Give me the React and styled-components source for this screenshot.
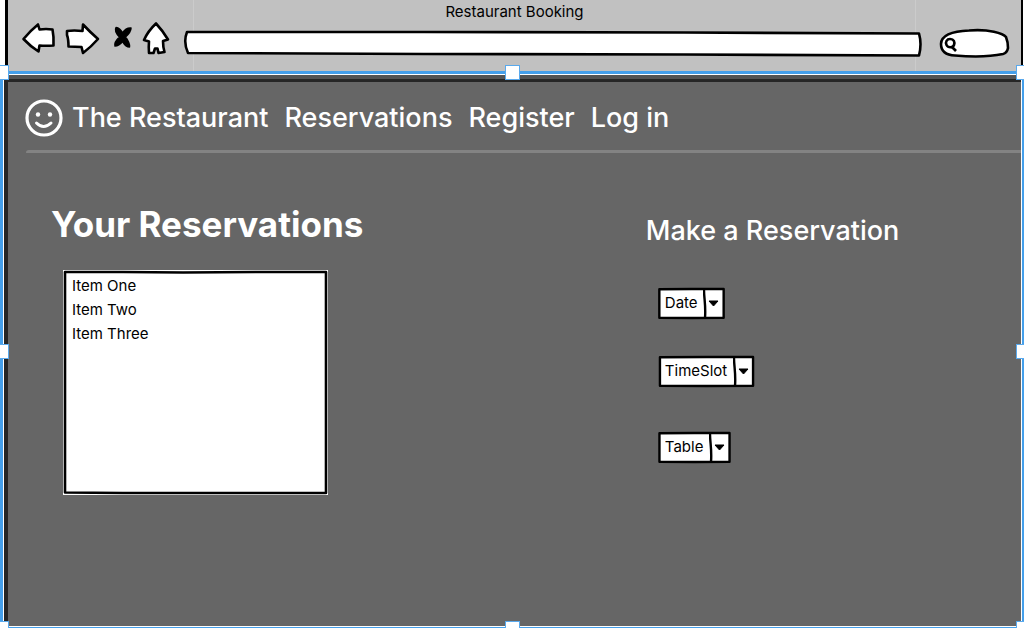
import React from "react";
import styled, { createGlobalStyle } from "styled-components";

const GlobalStyle = createGlobalStyle`
  *, *::before, *::after { box-sizing: border-box; }
  body {
    margin: 0;
    background: #fff;
    font-family: Inter, "Liberation Sans", sans-serif;
    color: #000;
  }
`;

const Page = styled.div`
  display: flex;
  flex-direction: column;
  min-height: 100vh;
  overflow: hidden;
`;

const Chrome = styled.header`
  display: flex;
  flex-direction: column;
  margin: 0 1px 0 5px;
  padding-bottom: 13px;
  border: solid #000;
  border-width: 0 2px 0 3px;
  background:
    linear-gradient(#cbcbcb, #cbcbcb) 185px 0 / 1px 100% no-repeat,
    linear-gradient(#cbcbcb, #cbcbcb) right 105px top 0 / 1px 100% no-repeat,
    #c1c1c1;
`;

const WindowTitle = styled.div`
  padding-top: 2px;
  font-size: 15px;
  line-height: 20px;
  text-align: center;
`;

const Toolbar = styled.div`
  display: flex;
  align-items: center;
  gap: 9px;
  height: 36px;
  padding: 0 11px 0 14px;
`;

const ToolButton = styled.button`
  display: flex;
  flex: none;
  width: ${(p) => p.$width}px;
  padding: 0;
  border: 0;
  background: none;

  svg {
    display: block;
    width: 100%;
    height: 36px;
    overflow: visible;
    fill: #fff;
    stroke: #000;
    stroke-width: 2.6;
    stroke-linejoin: round;
    stroke-linecap: round;
  }
`;

const Field = styled.div`
  position: relative;
  flex: ${(p) => (p.$width ? "none" : "1")};
  width: ${(p) => (p.$width ? p.$width + "px" : "auto")};
  height: 30px;
  margin-top: 6px;
  margin-left: ${(p) => (p.$width ? "8px" : "0")};

  input {
    position: relative;
    width: 100%;
    height: 100%;
    padding: 0 10px 0 ${(p) => (p.$width ? "20px" : "10px")};
    border: 0;
    outline: 0;
    background: transparent;
    font: inherit;
    font-size: 15px;
  }
`;

const Outline = styled.svg`
  position: absolute;
  inset: 0;
  width: 100%;
  height: 100%;
  overflow: visible;
  pointer-events: none;
  fill: ${(p) => p.$fill || "none"};
  stroke: #000;
  stroke-width: ${(p) => p.$stroke || 2.6};
  stroke-linejoin: round;

  path { vector-effect: non-scaling-stroke; }
`;

const Canvas = styled.div`
  position: relative;
  display: flex;
  flex: 1;
  padding: 4px 3px 2px 4px;
`;

const Selection = styled.div`
  position: absolute;
  inset: 0;
  border: solid #459fea;
  border-width: 3px 2px 1px 3px;
  box-shadow: inset 0 0 0 1px #fff;
  pointer-events: none;
`;

const place = {
  top: "top: -6px;",
  middle: "top: calc(50% - 6px);",
  bottom: "bottom: -8px;",
  left: "left: -6px;",
  center: "left: calc(50% - 7px);",
  right: "right: -7px;",
};

const Handle = styled.span`
  position: absolute;
  ${(p) => place[p.$v]}
  ${(p) => place[p.$h]}
  width: 15px;
  height: 15px;
  border: 1px solid #5aa9ec;
  background: #fff;
`;

const Screen = styled.div`
  display: flex;
  flex-direction: column;
  flex: 1;
  border-left: 4px solid #262626;
  background: #666;
  color: #fff;
`;

const TopEdge = styled.div`
  height: 7px;
  border-top: 4px solid #535353;
  background: #262626;
`;

const Nav = styled.nav`
  display: flex;
  align-items: center;
  gap: 16px;
  height: 68px;
  padding: 4px 17px 0;
`;

const Brand = styled.a`
  display: flex;
  align-items: center;
  gap: 9px;
  color: inherit;
  font-size: 27px;
  line-height: 36px;
  font-weight: 500;
  text-decoration: none;
  white-space: nowrap;

  svg { flex: none; }
`;

const NavLink = styled.a`
  color: inherit;
  font-size: 27px;
  line-height: 36px;
  font-weight: 500;
  text-decoration: none;
  white-space: nowrap;
`;

const Divider = styled.hr`
  width: auto;
  height: 3px;
  margin: 0 0 0 18px;
  border: 0;
  border-radius: 20px 0 0 2px;
  background: #838383;
`;

const Content = styled.main`
  display: grid;
  grid-template-columns: 17fr 10fr;
  padding: 47px 0 40px;
`;

const Column = styled.section`
  display: flex;
  flex-direction: column;
  align-items: flex-start;
  padding-left: ${(p) => p.$inset || 0}px;
`;

const Title = styled.h1`
  margin: 0;
  font-size: 35px;
  line-height: 48px;
  font-weight: 700;
  white-space: nowrap;
`;

const Subtitle = styled.h2`
  margin: 0;
  padding-top: 13px;
  font-size: 27px;
  line-height: 36px;
  font-weight: 500;
  white-space: nowrap;
`;

const List = styled.ul`
  position: relative;
  width: 265px;
  min-height: 225px;
  margin: 22px 0 0 12px;
  padding: 4px 9px;
  background: #fff;
  color: #000;
  list-style: none;
`;

const Item = styled.li`
  font-size: 15px;
  line-height: 24px;
`;

const Form = styled.form`
  display: flex;
  flex-direction: column;
  align-items: flex-start;
  padding: 39px 0 0 12px;
`;

const Picker = styled.label`
  position: relative;
  display: flex;
  height: 31px;
  margin-bottom: ${(p) => p.$space || 0}px;

  select {
    position: relative;
    appearance: none;
    padding: 0 27px 2px 7px;
    border: 0;
    outline: 0;
    background: transparent;
    color: #000;
    font: inherit;
    font-size: 15px;
  }
`;

const PickerArrow = styled.svg`
  position: absolute;
  top: 0;
  right: 0;
  width: 22px;
  height: 31px;
  pointer-events: none;
`;

function Select({ name, space }) {
  return (
    <Picker $space={space}>
      <Outline viewBox="0 0 100 100" preserveAspectRatio="none" $fill="#fff" $stroke={2.4} aria-hidden="true">
        <path d="M2 4 L50 3 L98 3 L98 50 L98 96 L50 97 L2 96 L2 50 Z" />
      </Outline>
      <select aria-label={name} defaultValue={name}>
        <option>{name}</option>
      </select>
      <PickerArrow viewBox="0 0 22 31" aria-hidden="true">
        <path d="M1 2 C1 10 3 18 2 30" fill="none" stroke="#000" strokeWidth="2.4" />
        <path d="M6 13 L15 13 L10.500 18 Z" stroke="#000" strokeWidth="1" strokeLinejoin="round" />
      </PickerArrow>
    </Picker>
  );
}

const handles = [
  ["top", "left"], ["top", "center"], ["top", "right"],
  ["middle", "left"], ["middle", "right"],
  ["bottom", "left"], ["bottom", "center"], ["bottom", "right"],
];

export default function App() {
  return (
    <Page>
      <GlobalStyle />
      <Chrome>
        <WindowTitle>Restaurant Booking</WindowTitle>
        <Toolbar>
          <ToolButton $width={34} aria-label="Back">
            <svg viewBox="22 22 34 36">
              <path d="M23.500 39 Q30 31 38 24.500 L39.500 29.500 Q46 28.500 52.500 29.500 Q54 37 53.500 45.500 Q46 46 39.500 45.500 L38.500 51.500 Q30 46 23.500 39 Z" />
            </svg>
          </ToolButton>
          <ToolButton $width={34} aria-label="Forward">
            <svg viewBox="65 22 34 36">
              <path d="M67 31 Q74 30 82.500 31 L83 24.500 Q90 32 98 39 Q91 47 83 53 L81.500 47 Q75 46.500 68.500 46.500 Q68.500 39 67 35 Z" />
            </svg>
          </ToolButton>
          <ToolButton $width={26} aria-label="Stop">
            <svg viewBox="108 22 26 36">
              <path
                d="M116 27.500 Q120 28 122.500 33 Q126 27.500 131 28 Q131 32 125.500 37 Q130 43 129.500 47 Q126 47 122.500 41.500 Q119 46 115 46 Q114 42 119.500 37 Q114 31 116 27.500 Z"
                fill="#000"
                strokeWidth="1.5"
              />
            </svg>
          </ToolButton>
          <ToolButton $width={32} aria-label="Home">
            <svg viewBox="143 22 32 36">
              <path d="M156 23.500 Q163 31 168 39.500 L163 41 Q163 47 164.500 52 L158.500 53 L157.500 48.500 L155 48.500 L153.500 53 L149 53 Q148.500 47 149 41.500 L144 40 Q148 31 156 23.500 Z" />
            </svg>
          </ToolButton>
          <Field>
            <Outline viewBox="0 0 738 30" preserveAspectRatio="none" $fill="#fff" aria-hidden="true">
              <path d="M3 4 L240 4 L500 4.500 L735 5.500 Q738 16 735 27.500 L500 26.500 L240 26 L4 25 Q-1 14 3 4 Z" />
            </Outline>
            <input type="text" aria-label="Address" />
          </Field>
          <Field $width={71}>
            <Outline viewBox="0 0 71 30" preserveAspectRatio="none" $fill="#fff" aria-hidden="true">
              <path d="M2 16 C2 8 12 3 30 2.500 C50 1 64 5 67 9 Q69 14 69 20 Q68 25 64 26 Q45 30 16 27.500 C6 27 2 23 2 16 Z" />
              <path d="M11 11 C15 11 16 14 15 17 C14 20 9 20 7.500 17 C6 14 8 11 11 11 Z" />
              <path d="M13 19 L17 23" />
            </Outline>
            <input type="text" aria-label="Search" />
          </Field>
        </Toolbar>
      </Chrome>
      <Canvas>
        <Screen>
          <TopEdge />
          <Nav>
            <Brand href="#">
              <svg width="38" height="38" viewBox="0 0 38 38" fill="none" stroke="#fff" strokeLinecap="round" aria-hidden="true">
                <circle cx="19" cy="19" r="17" strokeWidth="3.200" />
                <path d="M11.500 24 Q18.500 31 26 24" strokeWidth="3" />
                <circle cx="13" cy="15.500" r="2.200" fill="#fff" stroke="none" />
                <circle cx="25" cy="15.500" r="2.200" fill="#fff" stroke="none" />
              </svg>
              The Restaurant
            </Brand>
            <NavLink href="#">Reservations</NavLink>
            <NavLink href="#">Register</NavLink>
            <NavLink href="#">Log in</NavLink>
          </Nav>
          <Divider />
          <Content>
            <Column $inset={43}>
              <Title>Your Reservations</Title>
              <List>
                <Outline viewBox="0 0 265 225" preserveAspectRatio="none" $stroke={2.6} aria-hidden="true">
                  <path d="M2 2 L60 2 L120 2.500 L200 2 L263 2 L263 120 L263 223 L140 223 L60 223 L2 222.500 L2 110 Z" />
                </Outline>
                <Item>Item One</Item>
                <Item>Item Two</Item>
                <Item>Item Three</Item>
              </List>
            </Column>
            <Column>
              <Subtitle>Make a Reservation</Subtitle>
              <Form>
                <Select name="Date" space={37} />
                <Select name="TimeSlot" space={45} />
                <Select name="Table" />
              </Form>
            </Column>
          </Content>
        </Screen>
        <Selection />
        {handles.map(([v, h]) => (
          <Handle key={v + h} $v={v} $h={h} />
        ))}
      </Canvas>
    </Page>
  );
}
